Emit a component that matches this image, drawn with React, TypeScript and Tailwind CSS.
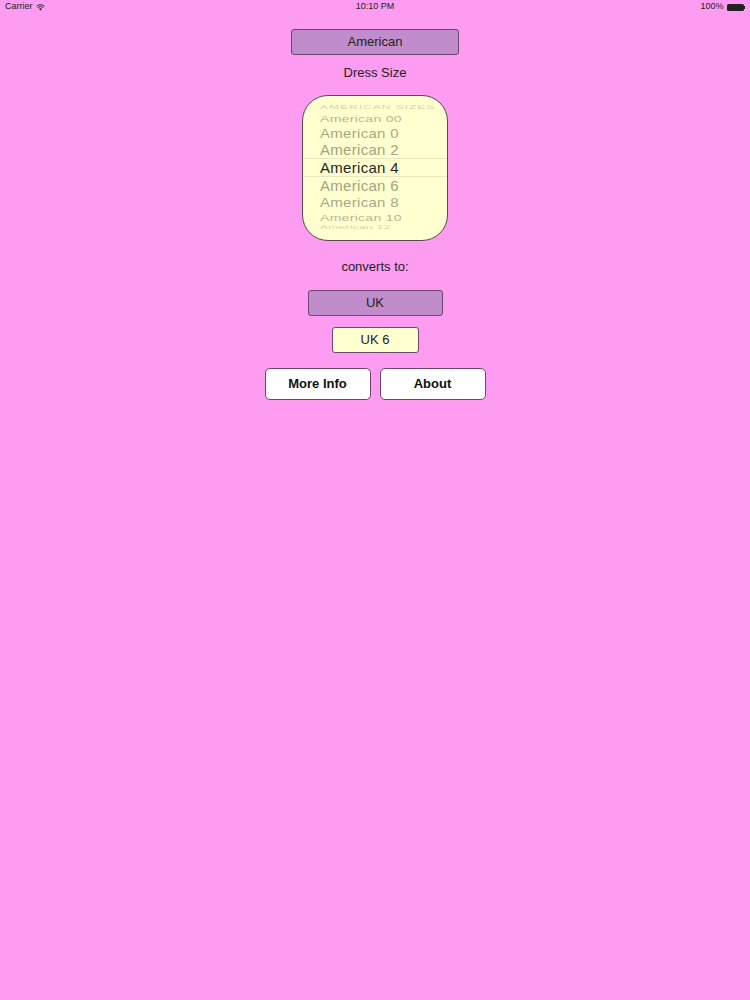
import React from "react";

const rows = [
  { label: "AMERICAN SIZES", top: 104, h: 10, scale: 0.45, op: 0.35, size: 12 },
  { label: "American 00", top: 113, h: 13, scale: 0.7, op: 0.6, size: 14 },
  { label: "American 0", top: 126, h: 16, scale: 0.88, op: 0.7, size: 15 },
  { label: "American 2", top: 142, h: 17, scale: 0.97, op: 0.75, size: 15 },
];
const rowsBelow = [
  { label: "American 6", top: 178, h: 17, scale: 0.97, op: 0.75, size: 15 },
  { label: "American 8", top: 195, h: 16, scale: 0.88, op: 0.7, size: 15 },
  { label: "American 10", top: 210, h: 13, scale: 0.7, op: 0.6, size: 14 },
  { label: "American 12", top: 222, h: 8, scale: 0.4, op: 0.35, size: 12 },
];

function PickerRow({ label, h, scale, op, size }: { label: string; h: number; scale: number; op: number; size: number }) {
  return (
    <div className="flex items-center overflow-visible pl-[17px]" style={{ height: h }}>
      <span
        className="whitespace-nowrap text-[#84846a] leading-none origin-left"
        style={{ transform: `scaleY(${scale})`, opacity: op, fontSize: size, letterSpacing: label === "AMERICAN SIZES" ? 1 : 0.3 }}
      >
        {label}
      </span>
    </div>
  );
}

const App: React.FC = () => {
  return (
    <div className="w-[750px] h-[1000px] bg-[#fd9cf1] font-['Liberation_Sans',Arial,sans-serif] text-black">
      {/* status bar */}
      <div className="h-[14px] px-[5px] flex items-center justify-between text-[9px] text-[#222]">
        <div className="flex items-center gap-[3px] w-[100px]">
          <span>Carrier</span>
          <svg width="9" height="7" viewBox="0 0 10 8">
            <path d="M5 7.5 L3.2 5.6 A2.6 2.6 0 0 1 6.8 5.6 Z" fill="#222" />
            <path d="M1.8 4.2 A4.6 4.6 0 0 1 8.2 4.2" stroke="#222" strokeWidth="1.1" fill="none" />
            <path d="M0.4 2.6 A6.6 6.6 0 0 1 9.6 2.6" stroke="#222" strokeWidth="1.1" fill="none" />
          </svg>
        </div>
        <span>10:10 PM</span>
        <div className="flex items-center justify-end gap-[3px] w-[100px]">
          <span>100%</span>
          <div className="flex items-center">
            <div className="w-[17px] h-[7px] bg-[#222] rounded-[1.5px]" />
            <div className="w-[1.5px] h-[3px] bg-[#222]" />
          </div>
        </div>
      </div>

      <div className="flex flex-col items-center">
        <button className="mt-[15px] w-[168px] h-[26px] bg-[#c18ccb] border border-[#6e4470] rounded-[3px] text-[13px] text-[#222]">
          American
        </button>
        <div className="mt-[11px] text-[13px] leading-[14px] text-[#222]">Dress Size</div>

        {/* picker */}
        <div className="mt-[15px] w-[146px] h-[146px] bg-[#ffffcf] border border-[#5a4a50] rounded-[26px] overflow-hidden flex flex-col pt-[6px]">
          {rows.map((r) => (
            <PickerRow key={r.label} {...r} />
          ))}
          <div className="h-[19px] flex items-center pl-[17px] border-y border-[#e6e6c0]">
            <span className="text-[15px] leading-none text-[#262626] tracking-[0.3px]">American 4</span>
          </div>
          {rowsBelow.map((r) => (
            <PickerRow key={r.label} {...r} />
          ))}
        </div>

        <div className="mt-[19px] text-[13px] leading-[14px] text-[#222]">converts to:</div>
        <button className="mt-[16px] w-[135px] h-[26px] bg-[#c18ccb] border border-[#6e4470] rounded-[3px] text-[13px] text-[#222]">
          UK
        </button>
        <div className="mt-[11px] w-[87px] h-[26px] bg-[#ffffcf] border border-[#6e4470] rounded-[3px] text-[13px] text-[#222] flex items-center justify-center">
          UK 6
        </div>
        <div className="mt-[15px] flex gap-[9px]">
          <button className="w-[106px] h-[32px] bg-white border border-[#6e4470] rounded-[5px] text-[13px] font-bold text-[#111]">
            More Info
          </button>
          <button className="w-[106px] h-[32px] bg-white border border-[#6e4470] rounded-[5px] text-[13px] font-bold text-[#111]">
            About
          </button>
        </div>
      </div>
    </div>
  );
};

export default App;
